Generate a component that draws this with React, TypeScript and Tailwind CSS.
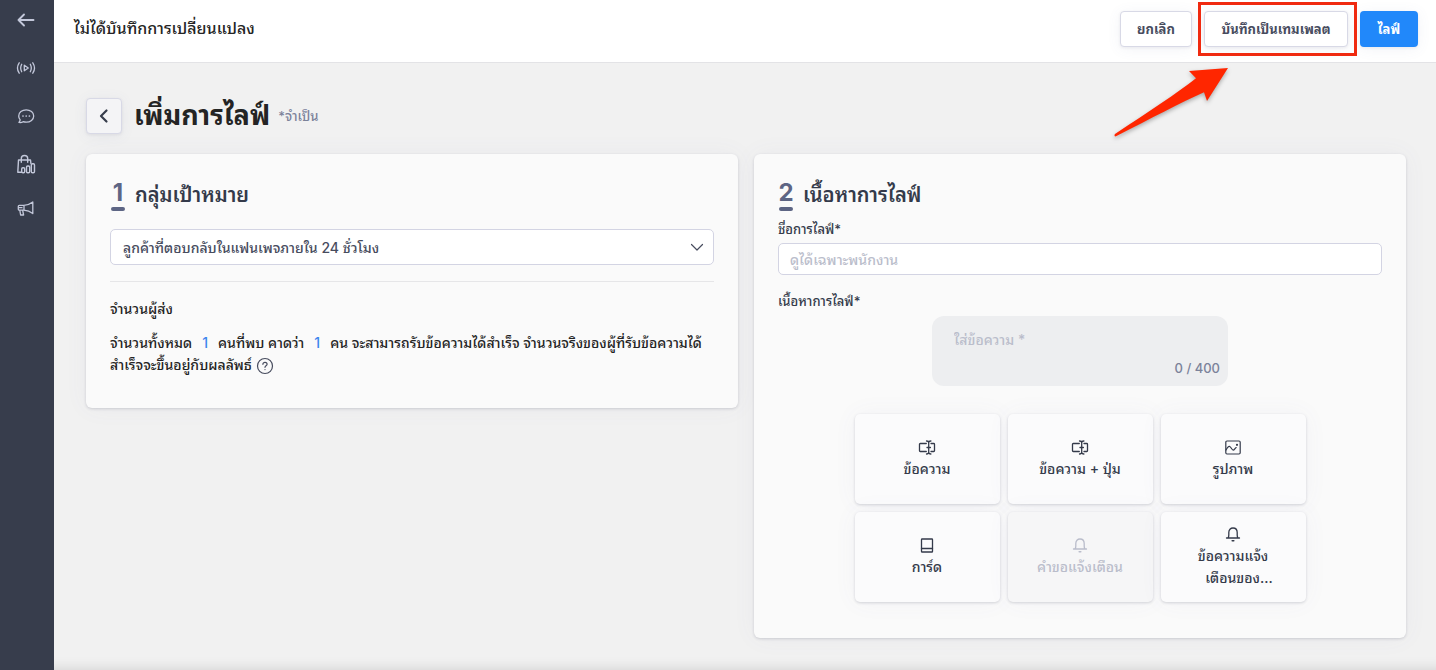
import type { ReactNode } from "react";

const CARD_SHADOW =
  "shadow-[0_1px_3px_rgba(60,66,87,0.2),0_0_24px_rgba(90,100,150,0.05)]";
const BUTTON_SHADOW =
  "shadow-[0_1px_3px_rgba(60,66,87,0.08),0_2px_14px_rgba(90,100,150,0.08)]";

function Icon({
  size = 16,
  width = 1.2,
  children,
}: {
  size?: number;
  width?: number;
  children: ReactNode;
}) {
  return (
    <svg
      width={size}
      height={size}
      viewBox={`0 0 ${size} ${size}`}
      fill="none"
      stroke="currentColor"
      strokeWidth={width}
      strokeLinecap="round"
      strokeLinejoin="round"
      aria-hidden="true"
      className="shrink-0"
    >
      {children}
    </svg>
  );
}

const BackArrow = () => (
  <Icon size={20} width={1.9}>
    <path d="M17.5 10H2.5M8 4.5 2.5 10 8 15.5" />
  </Icon>
);

const LiveIcon = () => (
  <Icon size={20} width={1.3}>
    <path d="M8.3 7.2v5.6l4-2.8z" />
    <path d="M5.7 6.3c-1.2 2.2-1.2 5.2 0 7.4M14.3 6.3c1.2 2.2 1.2 5.2 0 7.4M3.2 4.8c-2 3-2 7.4 0 10.4M16.8 4.8c2 3 2 7.4 0 10.4" />
  </Icon>
);

const ChatIcon = () => (
  <Icon size={20} width={1.3}>
    <path d="M10.2 3.8c4.2 0 7.5 2.7 7.5 6.2s-3.3 6.2-7.5 6.2c-1.1 0-2.2-.2-3.1-.5-1.2.8-2.7 1-4.2.7.7-.7 1.2-1.5 1.3-2.5-1-1.1-1.5-2.4-1.5-3.900 0-3.500 3.300-6.200 7.500-6.200z" />
    <path d="M7 10h.01M10.200 10h.01M13.400 10h.01" strokeWidth="1.700" />
  </Icon>
);

const ShopIcon = () => (
  <Icon size={20} width={1.4}>
    <path d="M5.700 18.300H1.800L2.500 6h12l.4 3.500M5.300 8.300V4.500c0-2 1.500-3 3.200-3s3.200 1 3.200 3v3.800" />
    <rect x="5.700" y="13.800" width="3" height="5" rx="1.200" />
    <rect x="10.500" y="12" width="3.200" height="6.800" rx="1.200" />
    <rect x="15.300" y="9.800" width="3.200" height="9" rx="1.200" />
  </Icon>
);

const MegaphoneIcon = () => (
  <Icon size={20} width={1.3}>
    <path d="M16.800 4c-2.500 2-5.300 3.200-9 3.300H3.300c-.6 0-1 .4-1 1v2.900c0 .6.4 1 1 1h4.500c3.700.2 6.500 1.300 9 3.300zM8 7.300v4.900M3.800 12.200l.8 4.800h3l-1-4.800M2.300 9.700H6M16.800 8.700v2" />
  </Icon>
);

const TextIcon = () => (
  <Icon size={18} width={1.3}>
    <path d="M8.300 5.500H2.300c-.5 0-.8.3-.8.8v6.400c0 .5.3.8.8.8h6M13 5.500h2.700c.5 0 .8.3.8.8v6.400c0 .5-.3.8-.8.8H13" />
    <path d="M8.500 3c1.300 0 2.200.5 2.200 1.700v9.600c0 1.200-.9 1.700-2.200 1.700M12.900 3c-1.300 0-2.200.5-2.200 1.700M12.900 16c-1.300 0-2.200-.5-2.200-1.700M9 9.500h3.400" />
  </Icon>
);

const ImageIcon = () => (
  <Icon size={18} width={1.2}>
    <rect x="1.800" y="3" width="14.400" height="13" rx="1.200" />
    <path d="M2 12c1.500-2.800 2.800-4 3.800-3.500 1.300.6 2 3.600 3.400 3.700 1.200 0 1.800-2.200 3-2.700" />
    <circle cx="13" cy="6.800" r=".5" fill="currentColor" />
  </Icon>
);

const CardIcon = () => (
  <Icon size={18} width={1.3}>
    <rect x="3.500" y="3" width="11" height="13" rx=".6" />
    <path d="M3.500 12.500h11" />
  </Icon>
);

const BellIcon = () => (
  <Icon size={18} width={1.3}>
    <path d="M2.500 13h13M4 13c.6-.8.8-1.700.8-3V7.500C4.800 4.900 6.500 3 9 3s4.200 1.900 4.200 4.500V10c0 1.300.2 2.200.8 3" />
    <path d="M8.200 15.800h1.600" strokeWidth="1.600" />
  </Icon>
);

const NAV = [
  { label: "ไลฟ์", icon: <LiveIcon />, cls: "mt-7" },
  { label: "แชท", icon: <ChatIcon />, cls: "mt-7" },
  { label: "ร้านค้า", icon: <ShopIcon />, cls: "mt-7" },
  { label: "โปรโมชัน", icon: <MegaphoneIcon />, cls: "mt-6" },
];

function SectionTitle({ n, children }: { n: number; children: ReactNode }) {
  return (
    <h2 className="flex items-center pt-px text-[20px] leading-8 font-semibold text-[#343a4a]">
      <span className="mr-[9px] flex w-4 flex-col items-center text-[24px] leading-7 font-bold text-[#5d6584]">
        {n}
        <span className="h-1 w-[14px] rounded-full bg-[#5d6584]" />
      </span>
      {children}
    </h2>
  );
}

function Tile({
  icon,
  children,
  disabled = false,
}: {
  icon: ReactNode;
  children: ReactNode;
  disabled?: boolean;
}) {
  return (
    <button
      type="button"
      disabled={disabled}
      className={`flex h-[90px] flex-col items-center justify-center gap-[2px] rounded-[5px] bg-[#fbfbfc] text-[14px] leading-[22px] font-medium text-[#343a4a] disabled:bg-[#f6f6f7] disabled:text-[#babdcb] ${CARD_SHADOW}`}
    >
      {icon}
      {children}
    </button>
  );
}

export default function App() {
  return (
    <div className="flex min-h-screen bg-[#f1f1f1] font-['Inter','Noto_Sans_Thai_Looped','Noto_Sans_Thai','Noto_Sans',sans-serif] text-[#242424]">
      <nav className="flex w-[54px] shrink-0 flex-col items-center bg-[#373d4c] pt-[10px] pr-[2px] text-[#c3c8da]">
        <a href="#back" aria-label="กลับ">
          <BackArrow />
        </a>
        {NAV.map((item) => (
          <a key={item.label} href="#menu" aria-label={item.label} className={item.cls}>
            {item.icon}
          </a>
        ))}
      </nav>

      <div className="flex min-w-0 flex-1 flex-col">
        <header className="flex h-[63px] items-start justify-between border-b border-[#e3e3e6] bg-white pt-[11px] pr-[18px] pl-5">
          <p className="text-[16px] leading-[34px] font-medium">ไม่ได้บันทึกการเปลี่ยนแปลง</p>
          <div className="flex text-[13px] leading-5 font-bold text-[#474c5e]">
            <button type="button" className={`h-9 w-[72px] rounded-[4px] border border-[#d8d9e6] bg-white ${BUTTON_SHADOW}`}>
              ยกเลิก
            </button>
            <div className="relative ml-3">
              <button type="button" className={`h-9 w-36 rounded-[4px] border border-[#d8d9e6] bg-white ${BUTTON_SHADOW}`}>
                บันทึกเป็นเทมเพลต
              </button>
              <span className="pointer-events-none absolute -top-[9px] -right-[9px] -bottom-[9px] -left-[6px] border-[3px] border-[#f02a10]" />
              <svg
                className="pointer-events-none absolute top-[52px] -left-[94px] drop-shadow-[0_2px_2px_rgba(0,0,0,0.3)]"
                width="124"
                height="78"
                viewBox="0 0 124 78"
                aria-hidden="true"
              >
                <path d="M118 5 79 8l7 7.300C66 31 40 48 5 71c-1 1-.5 2.800 1 2.300C42 55 70 40 94 29.300l3 8.700z" fill="#ff2600" />
              </svg>
            </div>
            <button type="button" className={`ml-3 h-9 w-[58px] rounded-[4px] bg-[#2188fa] text-white ${BUTTON_SHADOW}`}>
              ไลฟ์
            </button>
          </div>
        </header>

        <main className="flex flex-1 flex-col pt-[35px] pr-[30px] pb-8 pl-8 shadow-[inset_0_-14px_14px_-14px_rgba(0,0,0,0.15)]">
          <div className="flex h-9 items-center">
            <a
              href="#back"
              aria-label="ย้อนกลับ"
              className={`flex size-9 items-center justify-center rounded-[4px] border border-[#d8d9e6] bg-[#f4f4f6] text-[#373d4c] ${BUTTON_SHADOW}`}
            >
              <Icon size={16} width={2.2}>
                <path d="M10.500 2.500 5 8l5.500 5.500" />
              </Icon>
            </a>
            <h1 className="ml-3 text-[27px] leading-9 font-bold">เพิ่มการไลฟ์</h1>
            <span className="ml-2 text-[13px] leading-5 font-medium text-[#7b829a]">*จำเป็น</span>
          </div>

          <div className="mt-5 grid grid-cols-2 items-start gap-4">
            <section className={`rounded-[6px] bg-[#fafafa] p-6 pb-8 ${CARD_SHADOW}`}>
              <SectionTitle n={1}>กลุ่มเป้าหมาย</SectionTitle>
              <div className="relative mt-[18px]">
                <select
                  aria-label="กลุ่มเป้าหมาย"
                  className="h-9 w-full appearance-none rounded-[5px] border border-[#d3d4e3] bg-white px-3 text-[14px] font-medium text-[#474c5e]"
                >
                  <option>ลูกค้าที่ตอบกลับในแฟนเพจภายใน 24 ชั่วโมง</option>
                </select>
                <span className="pointer-events-none absolute top-[10px] right-[9px] text-[#474c5e]">
                  <Icon>
                    <path d="M2.500 5.500 8 11l5.500-5.500" />
                  </Icon>
                </span>
              </div>
              <hr className="mt-4 border-[#e6e6e8]" />
              <h3 className="mt-4 text-[14px] leading-[22px] font-medium">จำนวนผู้ส่ง</h3>
              <p className="mt-3 text-[14px] leading-[22px] font-medium">
                จำนวนทั้งหมด<span className="mx-[10px] text-[#3d86ee]">1</span>คนที่พบ คาดว่า
                <span className="mx-[10px] text-[#3d86ee]">1</span>คน จะสามารถรับข้อความได้สำเร็จ จำนวนจริงของผู้ที่รับข้อความได้สำเร็จจะขึ้นอยู่กับผลลัพธ์
                <button type="button" aria-label="ข้อมูลเพิ่มเติม" className="ml-1 inline-block align-middle text-[#474c5e]">
                  <Icon size={18}>
                    <circle cx="9" cy="9" r="7.500" />
                    <path d="M6.900 7.300c0-1.200.9-2 2.100-2s2.100.8 2.100 1.900c0 1.600-2.100 1.600-2.100 3.100M9 12.500v.1" />
                  </Icon>
                </button>
              </p>
            </section>

            <section className={`rounded-[6px] bg-[#fafafa] p-6 pb-9 ${CARD_SHADOW}`}>
              <SectionTitle n={2}>เนื้อหาการไลฟ์</SectionTitle>
              <label htmlFor="live-name" className="mt-2 block text-[13px] leading-5 font-medium text-[#343a4a]">
                ชื่อการไลฟ์*
              </label>
              <input
                id="live-name"
                placeholder="ดูได้เฉพาะพนักงาน"
                className="mt-1 block h-8 w-full rounded-[5px] border border-[#d3d4e3] bg-white px-[11px] text-[14px] font-medium placeholder:text-[#babdcb]"
              />
              <label htmlFor="live-text" className="mt-4 block text-[13px] leading-5 font-medium text-[#343a4a]">
                เนื้อหาการไลฟ์*
              </label>
              <div className="mx-auto mt-[5px] flex h-[70px] w-[296px] flex-col rounded-[12px] bg-[#edeef0] pt-3 pr-2 pb-2 pl-[22px]">
                <textarea
                  id="live-text"
                  rows={1}
                  placeholder="ใส่ข้อความ *"
                  className="h-6 w-full resize-none overflow-hidden bg-transparent text-[14px] leading-6 font-medium placeholder:text-[#babdcb]"
                />
                <span className="mt-auto text-right text-[13px] leading-5 font-medium text-[#7b829a]">0 / 400</span>
              </div>
              <div className="mt-7 grid grid-cols-[repeat(3,145px)] justify-center gap-2">
                <Tile icon={<TextIcon />}>ข้อความ</Tile>
                <Tile icon={<TextIcon />}>ข้อความ + ปุ่ม</Tile>
                <Tile icon={<ImageIcon />}>รูปภาพ</Tile>
                <Tile icon={<CardIcon />}>การ์ด</Tile>
                <Tile icon={<BellIcon />} disabled>
                  คำขอแจ้งเตือน
                </Tile>
                <Tile icon={<BellIcon />}>
                  <span>
                    ข้อความแจ้ง
                    <br />
                    <span className="pl-3">เตือนของ...</span>
                  </span>
                </Tile>
              </div>
            </section>
          </div>
        </main>
      </div>
    </div>
  );
}
